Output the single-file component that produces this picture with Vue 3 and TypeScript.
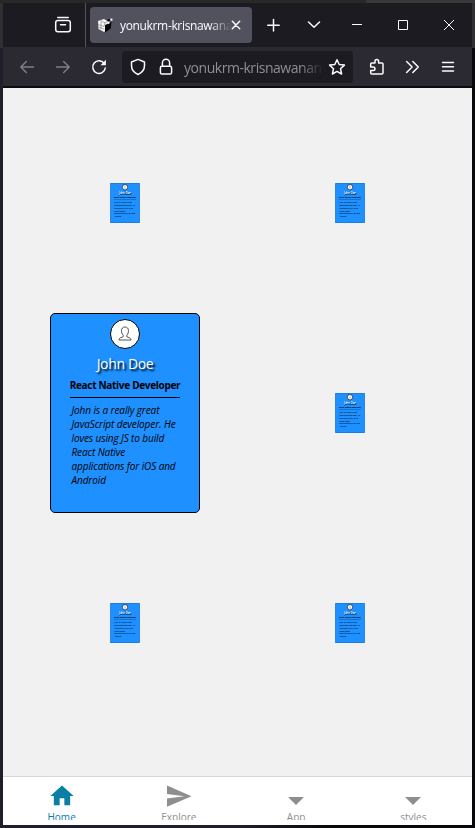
<script setup lang="ts">
interface Card { id: number; expanded: boolean }
const cards: Card[] = [0, 1, 2, 3, 4, 5].map((id) => ({ id, expanded: id === 2 }))
const tabs: { label: string; icon: string }[] = [
  { label: 'Home', icon: 'home' },
  { label: 'Explore', icon: 'send' },
  { label: 'App', icon: 'caret' },
  { label: 'styles', icon: 'caret' },
]
</script>

<template>
  <div class="desktop">
    <div class="window">
      <header class="titlebar">
        <div class="recent">
          <svg width="18" height="18" viewBox="0 0 18 18" class="line">
            <path d="M3.8 1.5h10.4" /><rect x="1.7" y="4.4" width="14.6" height="11.4" rx="2.2" /><path d="M6.5 8.8h5" />
          </svg>
        </div>
        <div class="tab">
          <svg class="favicon" width="17" height="17" viewBox="0 0 17 17">
            <path d="M1 4 7 2l4 2.5L10 13l-3 2-5.5-3z" fill="#f5f5f5" />
            <path d="m8 8 6.5-3-.7 6.5L8 15.5z" fill="#050507" />
            <path d="M3.5 3.7 8 5.8l3-1.3M1.2 7.5l5.8 2 1-4M4 4.5v8M1.4 10.2l6 2" fill="none" stroke="#77767f" stroke-width=".6" />
            <path d="m9.5 3 2.5-1 2 1-2.5 1.2z" fill="#09090b" />
            <path d="m13.5 1.5 2 .2-.2 2-2-.2zM10.5 5l2-.6v2l-2 .8z" fill="#fff" />
          </svg>
          <span class="tabtitle">yonukrm-krisnawana</span>
          <svg class="tabclose line" width="10" height="10" viewBox="0 0 10 10"><path d="m1.3 1.3 7.4 7.4m0-7.4L1.3 8.7" /></svg>
        </div>
        <div class="winbtn plus"><svg width="14" height="14" viewBox="0 0 14 14" class="line"><path d="M7.5 1.5v11.5M1.7 7.3h11.5" /></svg></div>
        <div class="winbtn chev"><svg width="14" height="14" viewBox="0 0 14 14" class="line"><path d="m1.5 4 5.5 5.3L12.5 4" /></svg></div>
        <div class="winbtn ctl"><svg width="12" height="12" viewBox="0 0 12 12" class="thin"><path d="M1 5.5h10" /></svg></div>
        <div class="winbtn ctl"><svg width="12" height="12" viewBox="0 0 12 12" class="thin"><path d="M1.5 1.5h9v9h-9z" /></svg></div>
        <div class="winbtn ctl"><svg width="12" height="12" viewBox="0 0 12 12" class="thin"><path d="m1 1 10 10M11 1 1 11" /></svg></div>
      </header>

      <div class="toolbar">
        <div class="nav dim"><svg width="16" height="16" viewBox="0 0 16 16" class="line"><path d="M14.5 8H1.8M7.3 2.5 1.8 8l5.5 5.5" /></svg></div>
        <div class="nav dim"><svg width="16" height="16" viewBox="0 0 16 16" class="line"><path d="M1.5 8h12.7M8.7 2.5 14.2 8l-5.5 5.5" /></svg></div>
        <div class="nav"><svg width="16" height="16" viewBox="0 0 16 16" class="line"><path d="M13.2 4.4A6.3 6.3 0 1 0 14.3 9" /><path d="M14.9.8v5.4H9.5z" fill="#fbfbfe" stroke="none" /></svg></div>
        <div class="urlbar">
          <svg width="16" height="18" viewBox="0 0 16 18" class="line"><path d="M8 1.4 14.5 4v3.5c0 4.2-2.7 7.4-6.5 9-3.8-1.6-6.5-4.8-6.5-9V4z" /></svg>
          <svg class="lock line" width="14" height="18" viewBox="0 0 14 18"><rect x="1.4" y="8.2" width="11.2" height="7.8" rx="1.6" /><path d="M3.4 8V4.8a3.6 3.6 0 0 1 7.2 0V8" /></svg>
          <span class="url">yonukrm-krisnawanan</span>
          <svg class="star line" width="18" height="18" viewBox="0 0 18 18"><path d="m9 1.7 2.2 4.8 5.2.6-3.9 3.6 1.1 5.3L9 13.4 4.4 16l1.1-5.3-3.9-3.6 5.2-.6z" /></svg>
        </div>
        <div class="tool ext"><svg width="16" height="18" viewBox="0 0 16 18" class="line"><path d="M1.7 9V6c0-.6.4-1 1-1H6V3.3a1.8 1.8 0 0 1 3.6 0V5h3.3c.7 0 1.1.4 1.1 1.1v8.7c0 .8-.4 1.2-1.1 1.2H2.8c-.7 0-1.1-.4-1.1-1.2v-2.3h2.5a1.7 1.7 0 0 0 0-3.5z" /></svg></div>
        <div class="tool more"><svg width="15" height="14" viewBox="0 0 15 14" class="line"><path d="m1.6 1.5 5.5 5.5-5.5 5.5m6.2-11L13.3 7l-5.5 5.5" /></svg></div>
        <div class="tool menu"><svg width="14" height="12" viewBox="0 0 14 12" class="line"><path d="M1.5 1.5h11M1.5 5.8h11M1.5 10.1h11" /></svg></div>
      </div>

      <main class="page">
        <div v-for="card in cards" :key="card.id" class="cell">
          <article class="card" :class="{ small: !card.expanded }">
            <div class="avatar">
              <svg width="14" height="16" viewBox="0 0 14 16"><path d="M5.2 9.2C3.9 7.8 3.5 6.3 3.5 4.6 3.5 2.4 4.9 1 7 1s3.5 1.4 3.5 3.6c0 1.7-.4 3.2-1.7 4.6v1.5l3 1.2c.8.4 1.2 1 1.2 2.1H1c0-1.1.4-1.7 1.2-2.1l3-1.2z" fill="none" stroke="#444" stroke-width=".9" /></svg>
            </div>
            <h1>John Doe</h1>
            <h2><span>React Native Developer</span></h2>
            <p>John is a really great<br>JavaScript developer. He<br>loves using JS to build<br>React Native<br>applications for iOS and<br>Android</p>
          </article>
        </div>
      </main>

      <nav class="bottom">
        <div v-for="tab in tabs" :key="tab.label" class="item" :class="{ active: tab.icon === 'home' }">
          <svg v-if="tab.icon === 'home'" width="28" height="28" viewBox="0 0 24 24"><path d="M10 20v-6h4v6h5v-8h3L12 3 2 12h3v8z" /></svg>
          <svg v-else-if="tab.icon === 'send'" width="28" height="28" viewBox="0 0 28 28"><path d="m2 3.5 24.5 10.7L2 24.8v-8.3l17.5-2.3L2 11.9z" /></svg>
          <svg v-else width="28" height="28" viewBox="0 0 28 28"><path d="M6 15h16l-8 8z" /></svg>
          <span class="label">{{ tab.label }}</span>
        </div>
      </nav>
    </div>
  </div>
</template>

<style>
body { margin: 0; overflow: hidden; }
</style>

<style scoped>
* { box-sizing: border-box; }
.desktop { width: 475px; height: 828px; padding: 3px; background: linear-gradient(90deg, #282828 0 77%, #383838 77%) 0 0 / 100% 3px no-repeat, linear-gradient(#303030, #303030) 0 0 / 100% 48px no-repeat, linear-gradient(90deg, #211e2b 0 50%, #08080a 70%); font-family: "Open Sans", "Noto Sans", sans-serif; }
.window { width: 469px; height: 822px; display: flex; flex-direction: column; background: #f1f1f1; }
svg { display: block; flex: none; }
.line { fill: none; stroke: #fbfbfe; stroke-width: 1.5; stroke-linecap: round; stroke-linejoin: round; }
.thin { fill: none; stroke: #fbfbfe; stroke-width: 1; }
.titlebar { height: 44px; flex: none; display: flex; align-items: center; background: #1c1b22; color: #fbfbfe; }
.recent { width: 83px; height: 44px; border-right: 1px solid #55545e; padding: 13px 0 0 51px; }
.tab { width: 162px; height: 36px; margin-left: 4px; border-radius: 4px; background: #52525e; display: flex; align-items: center; padding: 0 11px 0 7px; }
.tabtitle { width: 112px; margin: 2px 0 0 6px; white-space: nowrap; font-size: 12px; letter-spacing: -.34px; line-height: 20px; mask-image: linear-gradient(90deg, #000 80%, transparent); }
.tabclose { margin-left: -1px; }
.winbtn { height: 44px; display: flex; align-items: center; justify-content: center; flex: none; }
.plus { width: 42px; }
.chev { width: 40px; }
.ctl { width: 46px; }
.toolbar { height: 41px; flex: none; display: flex; align-items: center; background: #2b2a33; border-bottom: 2px solid #0c0c0d; padding-left: 6px; }
.nav { width: 36px; display: flex; justify-content: center; }
.dim { opacity: .4; }
.urlbar { width: 231px; height: 32px; margin-left: 5px; border-radius: 4px; background: #1c1b22; display: flex; align-items: center; padding: 0 7px 0 8px; }
.lock { margin-left: 13px; }
.url { width: 142px; margin: 2px 0 0 11px; white-space: nowrap; color: #8f8f97; font-size: 14px; letter-spacing: -.46px; line-height: 22px; mask-image: linear-gradient(90deg, #000 82%, transparent 98%); }
.star { margin-left: 2px; }
.tool { width: 38px; display: flex; justify-content: center; }
.ext { margin-left: 4px; width: 40px; }
.more { width: 30px; }
.menu { margin-left: 1px; width: 40px; }
.page { height: 688px; flex: none; display: grid; grid-template-columns: 225px 225px; grid-auto-rows: 210px; justify-content: center; padding-top: 10px; }
.cell { display: flex; align-items: center; justify-content: center; }
.card { width: 150px; height: 200px; border: 1px solid #000; border-radius: 5px; background: #1e90ff; display: flex; flex-direction: column; align-items: center; color: #000; }
.small { transform: scale(.2); }
.avatar { width: 30px; height: 30px; margin-top: 5px; flex: none; border-radius: 50%; border: 1px solid #000; background: #fff; display: flex; align-items: center; justify-content: center; }
.small .avatar { border-width: 3px; }
.small h1 { font-weight: 600; }
h1 { margin: 5px 0 0; font-size: 14px; line-height: 20px; font-weight: 400; color: #fff; text-shadow: 2px 2px 2px #000; letter-spacing: -.34px; white-space: nowrap; }
h2 { width: 110px; height: 24px; margin: 0; border-bottom: 1px solid #000; font-size: 10px; line-height: 22px; font-weight: 700; letter-spacing: -.3px; white-space: nowrap; display: flex; justify-content: center; }
p { width: 110px; margin: 5px 0 0 3px; font-size: 10px; line-height: 14px; font-style: italic; white-space: nowrap; letter-spacing: -.1px; }
.bottom { height: 49px; flex: none; display: flex; background: #fff; border-top: 1px solid #d8d8d8; }
.item { flex: 1; height: 43px; padding-top: 5px; overflow: hidden; display: flex; flex-direction: column; align-items: center; fill: #8e8e8f; color: #8e8e8f; }
.active { fill: #0a7ea4; color: #0a7ea4; }
.label { font-size: 10px; line-height: 15px; }
</style>
